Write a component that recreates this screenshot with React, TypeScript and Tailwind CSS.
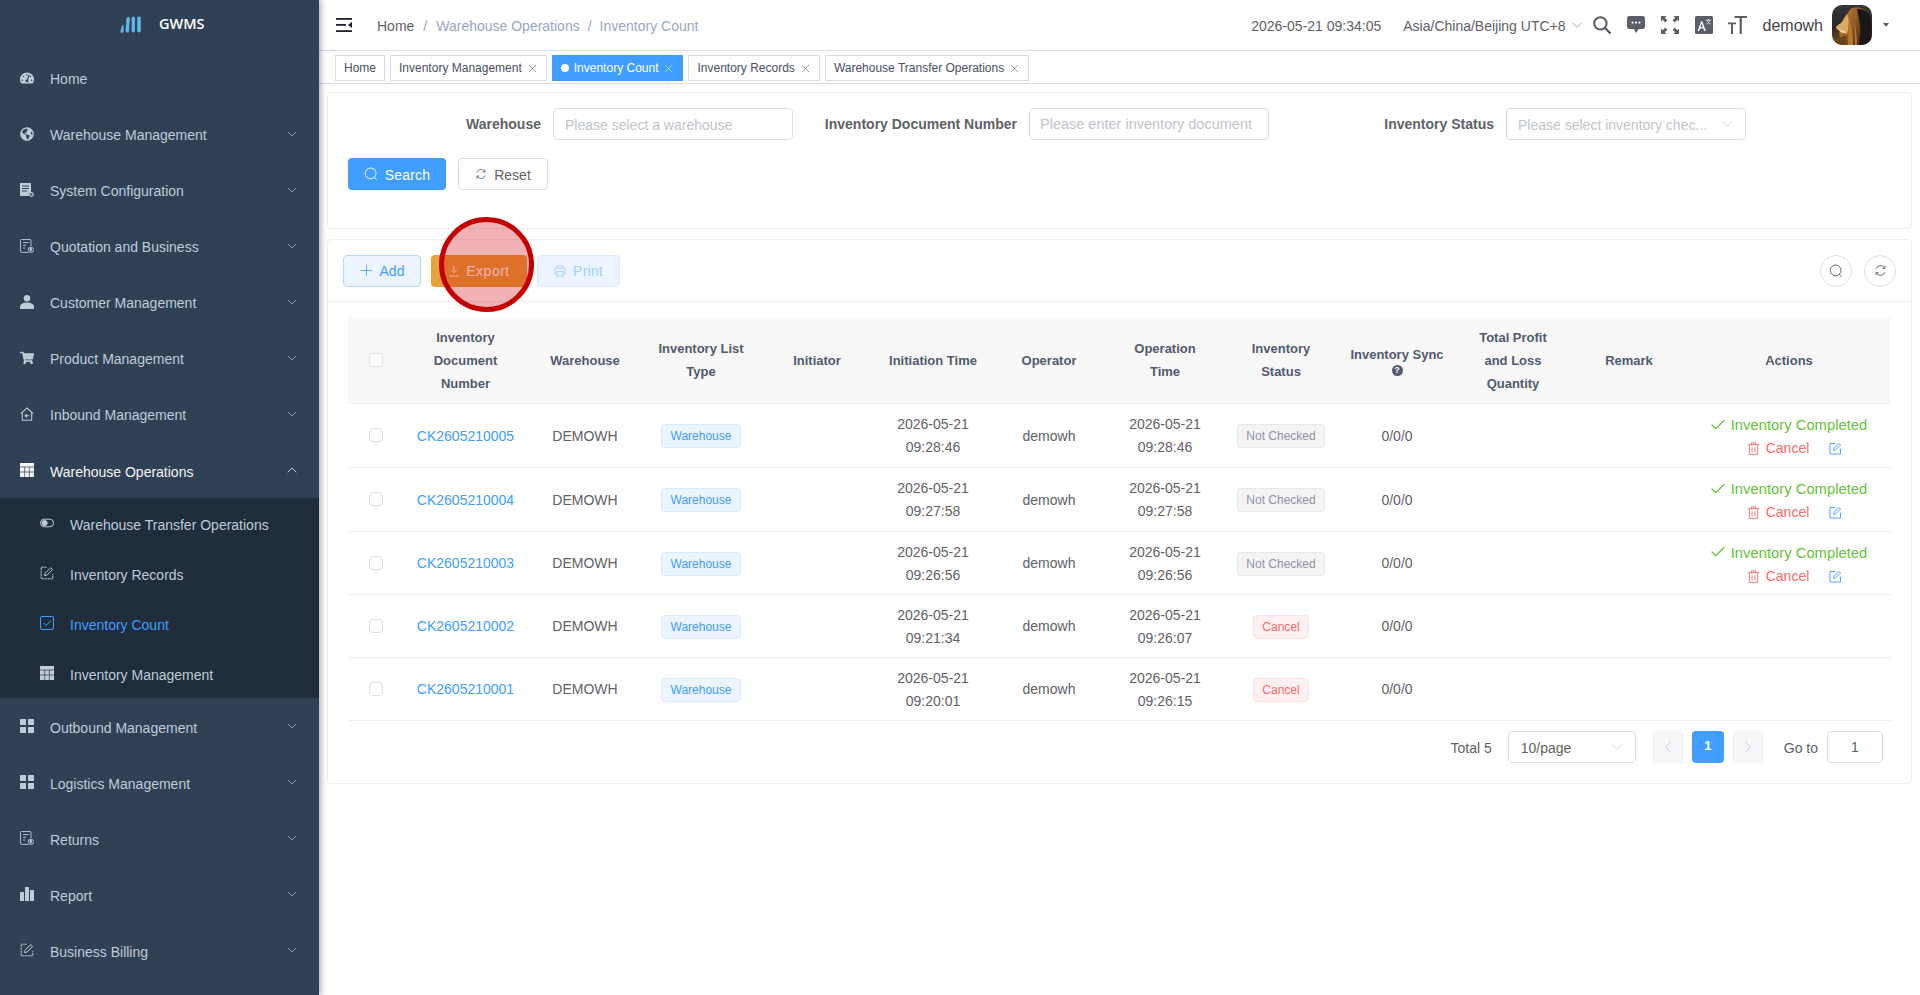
import React from 'react';
import { ChevronDown, ChevronUp, ChevronLeft, ChevronRight, Plus, X, Check } from 'lucide-react';
import { FaGlobeAmericas, FaShoppingCart, FaTachometerAlt } from 'react-icons/fa';

type Ico = React.FC<{ className?: string }>;

const GridIcon: Ico = ({ className }) => (
  <svg viewBox="0 0 14 14" className={className} fill="currentColor">
    <rect x="0" y="0" width="14" height="14" />
    <path d="M0 4h14M0 9h14M4.7 4v10M9.3 4v10" stroke="#2a3a4e" strokeWidth="0.7" />
  </svg>
);
const TilesIcon: Ico = ({ className }) => (
  <svg viewBox="0 0 14 14" className={className} fill="currentColor">
    <rect width="6" height="6" rx="0.5" />
    <rect x="8" width="6" height="6" rx="0.5" />
    <rect y="8" width="6" height="6" rx="0.5" />
    <rect x="8" y="8" width="6" height="6" rx="0.5" />
  </svg>
);
const BarsIcon: Ico = ({ className }) => (
  <svg viewBox="0 0 14 14" className={className} fill="currentColor">
    <rect y="5" width="4" height="9" />
    <rect x="5" y="0" width="4" height="14" />
    <rect x="10" y="3" width="4" height="11" />
  </svg>
);
const ConfigIcon: Ico = ({ className }) => (
  <svg viewBox="0 0 14 14" className={className}>
    <path d="M0 0h11v9.2a3 3 0 0 0-2 3.8H0z" fill="currentColor" />
    <path d="M2 3h7M2 5.5h7M2 8h5" stroke="#304156" strokeWidth="1" />
    <circle cx="11.5" cy="11.5" r="1.8" fill="none" stroke="currentColor" strokeWidth="1.2" />
  </svg>
);
const DocUserIcon: Ico = ({ className }) => (
  <svg viewBox="0 0 14 14" className={className} fill="none" stroke="currentColor" strokeWidth="0.9">
    <path d="M8 13.4H1.5a1 1 0 0 1-1-1V1.5a1 1 0 0 1 1-1h8.5a1 1 0 0 1 1 1V7" />
    <path d="M3 3.5h5.5M3 6.3h3M3 9h2" />
    <circle cx="10.8" cy="10.8" r="2.7" />
    <circle cx="10.8" cy="10" r="0.9" fill="currentColor" />
    <path d="M9.3 12.2c.6-1 2.4-1 3 0" fill="currentColor" />
  </svg>
);
const PersonIcon: Ico = ({ className }) => (
  <svg viewBox="0 0 14 14" className={className} fill="currentColor">
    <circle cx="7" cy="3.2" r="3.2" />
    <path d="M0 14v-2.4C0 9.4 3.2 7.6 7 7.6s7 1.8 7 4V14z" />
  </svg>
);
const HouseIcon: Ico = ({ className }) => (
  <svg viewBox="0 0 14 14" className={className} fill="none" stroke="currentColor" strokeWidth="1.1">
    <path d="M.8 6.6 7 1l6.2 5.6M2.3 5.6v7.7h9.4V5.6" />
    <path d="M9.3 8.8H5.2M6.8 7.2 5.2 8.8l1.6 1.6" />
  </svg>
);
const EditDashIcon: Ico = ({ className }) => (
  <svg viewBox="0 0 14 14" className={className} fill="none" stroke="currentColor" strokeWidth="1">
    <path d="M6.5 1.2H1.2v11.6h11.6V8" strokeDasharray="2.2 0.7" />
    <path d="M4.6 9.6l.5-2.4 5.6-5.6 1.9 1.9-5.6 5.6z" />
  </svg>
);
const ToggleIcon: Ico = ({ className }) => (
  <svg viewBox="0 0 14 10" className={className} fill="none" stroke="currentColor" strokeWidth="1">
    <rect x="0.5" y="1.2" width="13" height="7.6" rx="3.8" />
    <circle cx="4.6" cy="5" r="2.6" fill="currentColor" />
  </svg>
);
const CheckSquareIcon: Ico = ({ className }) => (
  <svg viewBox="0 0 14 14" className={className} fill="none" stroke="currentColor" strokeWidth="1">
    <rect x="0.5" y="0.5" width="13" height="13" rx="1.5" />
    <path d="M3.5 7l2.6 2.6 4.6-5" />
  </svg>
);
const SearchThin: Ico = ({ className }) => (
  <svg viewBox="0 0 14 14" className={className} fill="none" stroke="currentColor" strokeWidth="1">
    <circle cx="6.6" cy="6.4" r="5.4" />
    <path d="M10.4 10.4l2.2 2.4" />
  </svg>
);
const RefreshThin: Ico = ({ className }) => (
  <svg viewBox="0 0 14 14" className={className} fill="none" stroke="currentColor" strokeWidth="1">
    <path d="M2.2 5.2A5 5 0 0 1 11.4 4.4" />
    <path d="M11.8 8.8A5 5 0 0 1 2.6 9.6" />
    <path d="M11.8 1.8v2.9H9M2.2 12.2V9.3H5" />
  </svg>
);
const DownloadThin: Ico = ({ className }) => (
  <svg viewBox="0 0 14 14" className={className} fill="none" stroke="currentColor" strokeWidth="1">
    <path d="M7 1v8M3.8 6 7 9.2 10.2 6M1.5 12.8h11" />
  </svg>
);
const PrinterThin: Ico = ({ className }) => (
  <svg viewBox="0 0 14 14" className={className} fill="none" stroke="currentColor" strokeWidth="1">
    <path d="M3.5 3.5V1h7v2.5M3.5 10.5H1V3.5h12v7h-2.5" />
    <rect x="3.5" y="7.5" width="7" height="5.5" />
  </svg>
);
const TrashThin: Ico = ({ className }) => (
  <svg viewBox="0 0 12 14" className={className} fill="none" stroke="currentColor" strokeWidth="1">
    <path d="M0 2.8h12M3.8 2.8V.8h4.4v2M1.4 2.8v10.6h9.2V2.8M4.4 5.4v5.6M7.6 5.4v5.6" />
  </svg>
);
const EditThin: Ico = ({ className }) => (
  <svg viewBox="0 0 14 14" className={className} fill="none" stroke="currentColor" strokeWidth="1">
    <path d="M6.5 1.6H1v11.4h11.4V7" />
    <path d="M5 9l.5-2.2 5.2-5.2 1.7 1.7L7.2 8.5z" />
  </svg>
);

const Hamburger: Ico = ({ className }) => (
  <svg viewBox="0 0 16 14" className={className} fill="#1f2328">
    <rect width="16" height="1.8" />
    <rect y="6" width="10" height="1.8" />
    <rect y="12.2" width="16" height="1.8" />
    <path d="M16 3.8v6.2l-4-3.1z" />
  </svg>
);
const HeaderSearch: Ico = ({ className }) => (
  <svg viewBox="0 0 18 18" className={className} fill="none" stroke="#5a5e66" strokeWidth="2">
    <circle cx="7.4" cy="7.4" r="6.2" />
    <path d="M12 12l5 5" strokeLinecap="round" strokeWidth="2.4" />
  </svg>
);
const HeaderChat: Ico = ({ className }) => (
  <svg viewBox="0 0 18 18" className={className} fill="#5a5e66">
    <path d="M2.5 0h13A2.5 2.5 0 0 1 18 2.5v8a2.5 2.5 0 0 1-2.5 2.5h-3.7L9 17l-2.2-4H2.5A2.5 2.5 0 0 1 0 10.5v-8A2.5 2.5 0 0 1 2.5 0z" />
    <circle cx="5.6" cy="6.6" r="1.1" fill="#fff" />
    <circle cx="9" cy="6.6" r="1.1" fill="#fff" />
    <circle cx="12.4" cy="6.6" r="1.1" fill="#fff" />
  </svg>
);
const HeaderFull: Ico = ({ className }) => (
  <svg viewBox="0 0 18 18" className={className} fill="#5a5e66">
    <path d="M0 0h5.5L3.8 1.7l2.6 2.6-2.1 2.1-2.6-2.6L0 5.5zM18 0v5.5l-1.7-1.7-2.6 2.6-2.1-2.1 2.6-2.6L12.5 0zM0 18v-5.5l1.7 1.7 2.6-2.6 2.1 2.1-2.6 2.6L5.5 18zM18 18h-5.5l1.7-1.7-2.6-2.6 2.1-2.1 2.6 2.6 1.7-1.7z" />
  </svg>
);
const HeaderLang: Ico = ({ className }) => (
  <svg viewBox="0 0 18 18" className={className}>
    <rect width="18" height="18" rx="1.5" fill="#5a5e66" />
    <path d="M2.6 15 6 5.4h1.4L10.8 15H9.2l-.8-2.4H5l-.8 2.4zM5.5 11.2h2.4L6.7 7.4z" fill="#fff" />
    <path d="M11 4.2h5M13.5 3v1.2M15 4.2c-.5 2-2 3.2-3.6 3.8M12 4.2c.4 1.6 2 3.2 3.8 3.8" stroke="#fff" strokeWidth="0.7" fill="none" />
  </svg>
);
const HeaderSize: Ico = ({ className }) => (
  <svg viewBox="0 0 19 18" className={className} fill="#5a5e66">
    <path d="M6.5 0H19v2h-5.2v16h-2.2V2H6.5z" />
    <path d="M0 6.5h8v1.7H5v9.8H3V8.2H0z" />
  </svg>
);

// lion photo, roughly painted
const Avatar = () => (
  <svg viewBox="0 0 40 40" className="h-10 w-10 rounded-[10px]">
    <defs>
      <linearGradient id="lionbg" x1="0" y1="0" x2="0" y2="1">
        <stop offset="0" stopColor="#33363d" />
        <stop offset="0.55" stopColor="#2a2826" />
        <stop offset="1" stopColor="#7a4f1f" />
      </linearGradient>
      <linearGradient id="lionfur" x1="0" y1="0" x2="1" y2="0.6">
        <stop offset="0" stopColor="#c98d45" />
        <stop offset="0.55" stopColor="#8f5a24" />
        <stop offset="1" stopColor="#3a2412" />
      </linearGradient>
      <filter id="lionsoft">
        <feGaussianBlur stdDeviation="0.7" />
      </filter>
    </defs>
    <rect width="40" height="40" fill="url(#lionbg)" />
    <g filter="url(#lionsoft)">
      <path d="M20 3c6-2 13 0 17 5v32H9c0-6-3-10-1-15 2-3 2-6 4-9 2-5 4-10 8-13z" fill="url(#lionfur)" />
      <path d="M25 4c6 0 10 2 12 5 3 8 3 22 2 31H27c1-8 2-14 1-20-1-6-2-11-3-16z" fill="#1d1714" />
      <path d="M15 9c-3 3-4 7-6 9-2 1-5 3-5 5 1 2 4 3 6 3 1 2 3 3 5 3 2-6 3-14 0-20z" fill="#dba866" />
      <path d="M6 23c1 2 4 3 7 3l-1 2c-3 0-5-2-6-5z" fill="#f0d6a6" />
      <path d="M17 14c3 7 4 15 4 26h-5c0-9 0-17 1-26z" fill="#b8742b" />
      <path d="M22 16c2 7 3 16 3 24h-2c0-8 0-16-1-24z" fill="#d4953f" opacity="0.7" />
      <path d="M3 36c3-3 7-5 11-5l1 9H3z" fill="#6a451f" />
    </g>
  </svg>
);

const Logo = () => (
  <svg viewBox="0 0 22 17" className="h-[17px] w-[22px]" fill="#62b6e7">
    <path d="M0.4 15.6 2 9.6c.3-1 1.6-.8 1.6.2v5.6c0 1.8-3.6 1.8-3.2.2z" />
    <rect x="6" y="1" width="3.4" height="15.5" rx="1.7" transform="rotate(4 7.7 9)" />
    <rect x="11.6" y="0.5" width="3.4" height="16" rx="1.7" />
    <rect x="17.2" y="0.5" width="3.6" height="16" rx="1.8" />
  </svg>
);

const menuTop = [
  { label: 'Home', Icon: FaTachometerAlt as Ico, noArrow: true },
  { label: 'Warehouse Management', Icon: FaGlobeAmericas as Ico },
  { label: 'System Configuration', Icon: ConfigIcon },
  { label: 'Quotation and Business', Icon: DocUserIcon },
  { label: 'Customer Management', Icon: PersonIcon },
  { label: 'Product Management', Icon: FaShoppingCart as Ico },
  { label: 'Inbound Management', Icon: HouseIcon },
];
const subMenu = [
  { label: 'Warehouse Transfer Operations', Icon: ToggleIcon },
  { label: 'Inventory Records', Icon: EditDashIcon },
  { label: 'Inventory Count', Icon: CheckSquareIcon, active: true },
  { label: 'Inventory Management', Icon: GridIcon },
];
const menuBottom = [
  { label: 'Outbound Management', Icon: TilesIcon },
  { label: 'Logistics Management', Icon: TilesIcon },
  { label: 'Returns', Icon: DocUserIcon },
  { label: 'Report', Icon: BarsIcon },
  { label: 'Business Billing', Icon: EditDashIcon },
];

const MenuRow = ({ label, Icon, noArrow, low }: { label: string; Icon: Ico; noArrow?: boolean; low?: boolean }) => (
  <div className="flex h-14 items-center pl-5 pr-[19px] text-sm text-[#bfcbd9]">
    <Icon className="h-[14px] w-[14px] shrink-0" />
    <span className={`ml-4 flex-1 ${low ? 'pt-1' : 'pt-[2px]'}`}>{label}</span>
    {!noArrow && <ChevronDown className="h-4 w-4 text-[#a9b6c6]" strokeWidth={1.1} />}
  </div>
);

const Sidebar = () => (
  <aside className="relative z-10 h-full w-[319px] shrink-0 overflow-hidden bg-[#304156] shadow-[2px_0_6px_rgba(0,21,41,0.35)]">
    <div className="flex h-[50px] items-center pb-[2px] pl-[120px]">
      <Logo />
      <span className="ml-[17px] font-['Open_Sans',sans-serif] text-[14.5px] font-semibold text-white">GWMS</span>
    </div>
    {menuTop.map(m => (
      <MenuRow key={m.label} {...m} />
    ))}
    <div className="flex h-14 items-center pl-5 pr-[19px] text-sm text-[#f4f4f5]">
      <GridIcon className="h-[14px] w-[14px] shrink-0" />
      <span className="ml-4 flex-1 pt-[3px]">Warehouse Operations</span>
      <ChevronUp className="h-4 w-4" strokeWidth={1.1} />
    </div>
    <div className="bg-[#1f2d3d]">
      {subMenu.map(s => (
        <div key={s.label} className={`flex h-[50px] items-center pl-10 text-sm ${s.active ? 'text-[#409eff]' : 'text-[#bfcbd9]'}`}>
          <s.Icon className="h-[14px] w-[14px] shrink-0" />
          <span className="ml-4 pt-1">{s.label}</span>
        </div>
      ))}
    </div>
    {menuBottom.map(m => (
      <MenuRow key={m.label} {...m} low />
    ))}
  </aside>
);

const Header = () => (
  <div className="flex h-[51px] shrink-0 items-center border-b border-[#d8dce5] pl-[17px] text-sm">
    <Hamburger className="h-[14px] w-4" />
    <div className="ml-[25px] flex items-center pt-[2px] text-[#606266]">
      <span>Home</span>
      <span className="mx-[9px] text-[#97a8be]">/</span>
      <span className="text-[#97a8be]">Warehouse Operations</span>
      <span className="mx-[8px] text-[#97a8be]">/</span>
      <span className="text-[#97a8be]">Inventory Count</span>
    </div>
    <div className="ml-auto flex items-center text-[#606266]">
      <span className="pt-[2px]">2026-05-21 09:34:05</span>
      <span className="ml-[22px] pt-[2px]">Asia/China/Beijing UTC+8</span>
      <ChevronDown className="ml-[2px] h-[18px] w-[18px] text-[#909399]" strokeWidth={1.1} />
      <HeaderSearch className="ml-[7px] h-[18px] w-[18px]" />
      <HeaderChat className="ml-4 h-[18px] w-[18px]" />
      <HeaderFull className="ml-4 h-[18px] w-[18px]" />
      <HeaderLang className="ml-4 h-[18px] w-[18px]" />
      <HeaderSize className="ml-[15px] h-[18px] w-[19px]" />
      <span className="ml-4 pt-[2px] text-base text-[#3f4349]">demowh</span>
      <div className="ml-[9px]"><Avatar /></div>
      <span className="ml-[11px] mr-[31px] h-0 w-0 border-x-[3.5px] border-t-[4px] border-x-transparent border-t-[#5a5e66]" />
    </div>
  </div>
);

const tabs = [
  { label: 'Home' },
  { label: 'Inventory Management', close: true },
  { label: 'Inventory Count', close: true, active: true },
  { label: 'Inventory Records', close: true },
  { label: 'Warehouse Transfer Operations', close: true },
];

const TabBar = () => (
  <div className="flex h-[33px] shrink-0 items-start gap-[5px] border-b border-[#d8dce5] pl-4 pt-1 text-xs">
    {tabs.map(t => (
      <div
        key={t.label}
        className={`flex h-[26px] items-center border pl-2 ${t.close ? 'pr-[7px]' : 'pr-2'} ${t.active ? 'border-[#409eff] bg-[#409eff] text-white' : 'border-[#d8dce5] bg-white text-[#495060]'}`}
      >
        {t.active && <span className="mr-[5px] h-2 w-2 rounded-full bg-white" />}
        {t.label}
        {t.close && <X className="ml-[4px] h-[13px] w-[13px]" strokeWidth={1} />}
      </div>
    ))}
  </div>
);

const Field = ({ label, labelClass, children }: { label: string; labelClass: string; children: React.ReactNode }) => (
  <div className="flex items-center gap-3">
    <label className={`text-right text-sm font-bold text-[#606266] ${labelClass}`}>{label}</label>
    {children}
  </div>
);

const SearchCard = () => (
  <div className="h-[137px] rounded border border-[#ebeef5] bg-white px-5 pt-[15px]">
    <div className="flex gap-3">
      <Field label="Warehouse" labelClass="w-[193px]">
        <div className="flex h-8 w-60 items-center rounded border border-[#dcdfe6] px-[11px] pt-px text-sm text-[#c0c4cc]">Please select a warehouse</div>
      </Field>
      <Field label="Inventory Document Number" labelClass="w-[212px]">
        <div className="flex h-8 w-60 items-center rounded border border-[#dcdfe6] px-[10px] pt-px text-[14.5px] text-[#c0c4cc]">Please enter inventory document</div>
      </Field>
      <Field label="Inventory Status" labelClass="w-[213px]">
        <div className="flex h-8 w-60 items-center justify-between rounded border border-[#dcdfe6] pl-[11px] pr-[9px] text-sm text-[#c0c4cc]">
          <span className="pt-px">Please select inventory chec...</span>
          <ChevronDown className="h-[18px] w-[18px]" strokeWidth={1} />
        </div>
      </Field>
    </div>
    <div className="mt-[18px] flex gap-3">
      <button className="flex h-8 w-[98px] items-center justify-center gap-[7px] rounded bg-[#409eff] text-sm tracking-[0.2px] text-white">
        <SearchThin className="h-[14px] w-[14px]" />
        <span className="pt-[2px]">Search</span>
      </button>
      <button className="flex h-8 w-[90px] items-center justify-center gap-[7px] rounded border border-[#dcdfe6] bg-white text-sm text-[#606266]">
        <RefreshThin className="h-3 w-3" />
        <span className="pt-[2px]">Reset</span>
      </button>
    </div>
  </div>
);

const Toolbar = () => (
  <div className="flex h-[62px] items-center border-b border-[#ebeef5] pl-[15px] pr-[15px]">
    <button className="flex h-8 w-[78px] items-center justify-center gap-1 rounded border border-[#b3d8ff] bg-[#ecf5ff] pr-[3px] text-sm text-[#409eff]">
      <Plus className="h-[19px] w-[19px]" strokeWidth={1} />
      Add
    </button>
    <div className="relative ml-[10px] h-8 w-[96px]">
      <button className="flex h-8 w-full items-center justify-center gap-[6px] rounded bg-[#e6a23c] text-sm tracking-[0.5px] text-white">
        <DownloadThin className="h-3 w-3" />
        Export
      </button>
      {/* click marker over the Export button */}
      <span className="absolute left-2 top-[-38px] h-[95px] w-[95px] rounded-full border-[5px] border-[#c40000] bg-[rgba(204,0,0,0.3)]" />
    </div>
    <button className="ml-[10px] flex h-8 w-[83px] items-center justify-center gap-[7px] rounded border border-[#d9ecff] bg-[#ecf5ff] text-sm tracking-[0.2px] text-[#a0cfff]">
      <PrinterThin className="h-3 w-3" />
      Print
    </button>
    <div className="ml-auto flex gap-3">
      <button className="flex h-8 w-8 items-center justify-center rounded-full border border-[#dcdfe6] text-[#606266]">
        <SearchThin className="h-[14px] w-[14px]" />
      </button>
      <button className="flex h-8 w-8 items-center justify-center rounded-full border border-[#dcdfe6] text-[#606266]">
        <RefreshThin className="h-[13px] w-[13px]" />
      </button>
    </div>
  </div>
);

const rows = [
  { no: 'CK2605210005', t1: '09:28:46', t2: '09:28:46', status: 'Not Checked', h: 'h-[64px]' },
  { no: 'CK2605210004', t1: '09:27:58', t2: '09:27:58', status: 'Not Checked', h: 'h-[64px]' },
  { no: 'CK2605210003', t1: '09:26:56', t2: '09:26:56', status: 'Not Checked', h: 'h-[63px]' },
  { no: 'CK2605210002', t1: '09:21:34', t2: '09:26:07', status: 'Cancel', h: 'h-[63px]' },
  { no: 'CK2605210001', t1: '09:20:01', t2: '09:26:15', status: 'Cancel', h: 'h-[63px]' },
];

const Checkbox = ({ className = '' }: { className?: string }) => (
  <span className={`mx-auto block h-[14px] w-[14px] rounded-sm border border-[#dcdfe6] bg-white ${className}`} />
);

const Tag = ({ text, className }: { text: string; className: string }) => (
  <span className={`inline-flex h-6 items-center rounded border px-[8.5px] text-xs ${className}`}>{text}</span>
);

const DataTable = () => (
  <table className="w-full table-fixed border-collapse text-center text-sm leading-[23px] text-[#606266]">
    <colgroup>
      <col className="w-[56px]" />
      <col className="w-[123px]" />
      {Array.from({ length: 10 }).map((_, i) => (
        <col key={i} className="w-[116px]" />
      ))}
      <col className="w-[204px]" />
    </colgroup>
    <thead>
      <tr className="h-[85px] border-b border-[#ebeef5] bg-[#f8f8f9] text-[13px] font-bold text-[#515a6e]">
        <th><Checkbox /></th>
        <th className="font-bold">Inventory<br />Document<br />Number</th>
        <th className="font-bold">Warehouse</th>
        <th className="font-bold">Inventory List<br />Type</th>
        <th className="font-bold">Initiator</th>
        <th className="font-bold">Initiation Time</th>
        <th className="font-bold">Operator</th>
        <th className="font-bold">Operation<br />Time</th>
        <th className="font-bold">Inventory<br />Status</th>
        <th className="font-bold">
          Inventory Sync
          <span className="mx-auto flex h-[11px] w-[11px] -translate-y-px items-center justify-center rounded-full bg-[#515a6e] text-[9px] leading-none text-white">?</span>
        </th>
        <th className="font-bold">Total Profit<br />and Loss<br />Quantity</th>
        <th className="font-bold">Remark</th>
        <th className="font-bold">Actions</th>
      </tr>
    </thead>
    <tbody>
      {rows.map(r => (
        <tr key={r.no} className={`border-b border-[#ebeef5] [&>td]:pt-[2px] ${r.h}`}>
          <td><Checkbox className="-translate-y-px" /></td>
          <td className="text-[#409eff]">{r.no}</td>
          <td>DEMOWH</td>
          <td><Tag text="Warehouse" className="border-[#d9ecff] bg-[#ecf5ff] text-[#409eff]" /></td>
          <td />
          <td>2026-05-21<br />{r.t1}</td>
          <td>demowh</td>
          <td>2026-05-21<br />{r.t2}</td>
          <td>
            {r.status === 'Cancel' ? (
              <Tag text="Cancel" className="border-[#fde2e2] bg-[#fef0f0] text-[#f56c6c]" />
            ) : (
              <Tag text="Not Checked" className="border-[#e9e9eb] bg-[#f4f4f5] text-[#909399]" />
            )}
          </td>
          <td>0/0/0</td>
          <td />
          <td />
          <td>
            {r.status !== 'Cancel' && (
              <div className="translate-y-px">
                <div className="flex items-center justify-center gap-1 pr-[2px] text-[14.8px] text-[#67c23a]">
                  <Check className="h-[18px] w-[18px] -translate-y-px" strokeWidth={1.6} />
                  Inventory Completed
                </div>
                <div className="flex items-center justify-center pl-3">
                  <TrashThin className="h-[13px] w-[11px] text-[#f56c6c]" />
                  <span className="ml-[7px] text-[#f56c6c]">Cancel</span>
                  <EditThin className="ml-5 h-[13px] w-[13px] text-[#409eff]" />
                </div>
              </div>
            )}
          </td>
        </tr>
      ))}
    </tbody>
  </table>
);

const Pagination = () => (
  <div className="flex items-center justify-end pb-5 pr-2 pt-[10px] text-sm text-[#606266]">
    <span className="pt-[2px]">Total 5</span>
    <div className="ml-4 flex h-8 w-32 items-center justify-between rounded border border-[#dcdfe6] pl-3 pr-[9px]">
      <span className="pt-[2px]">10/page</span>
      <ChevronDown className="h-[18px] w-[18px] text-[#c0c4cc]" strokeWidth={1} />
    </div>
    <div className="ml-4 flex gap-2">
      <span className="flex h-8 w-8 items-center justify-center rounded-sm bg-[#f4f6f8] text-[#c0c4cc]">
        <ChevronLeft className="h-5 w-5" strokeWidth={1} />
      </span>
      <span className="flex h-8 w-8 items-center justify-center rounded-sm bg-[#409eff] text-[13px] font-bold text-white">1</span>
      <span className="flex h-8 w-8 items-center justify-center rounded-sm bg-[#f4f6f8] text-[#c0c4cc]">
        <ChevronRight className="h-5 w-5" strokeWidth={1} />
      </span>
    </div>
    <span className="ml-5 pt-[2px]">Go to</span>
    <div className="ml-[9px] flex h-8 w-14 items-center justify-center rounded border border-[#dcdfe6] pt-px">1</div>
  </div>
);

const App = () => (
  <div className="flex h-[995px] w-[1920px] overflow-hidden bg-white font-['Liberation_Sans',Arial,sans-serif]">
    <Sidebar />
    <main className="flex min-w-0 flex-1 flex-col">
      <Header />
      <TabBar />
      <div className="flex flex-col gap-[10px] pl-2 pr-2 pt-2">
        <SearchCard />
        <div className="rounded border border-[#ebeef5] bg-white">
          <Toolbar />
          <div className="px-5 pt-4">
            <DataTable />
            <Pagination />
          </div>
        </div>
      </div>
    </main>
  </div>
);

export default App;
